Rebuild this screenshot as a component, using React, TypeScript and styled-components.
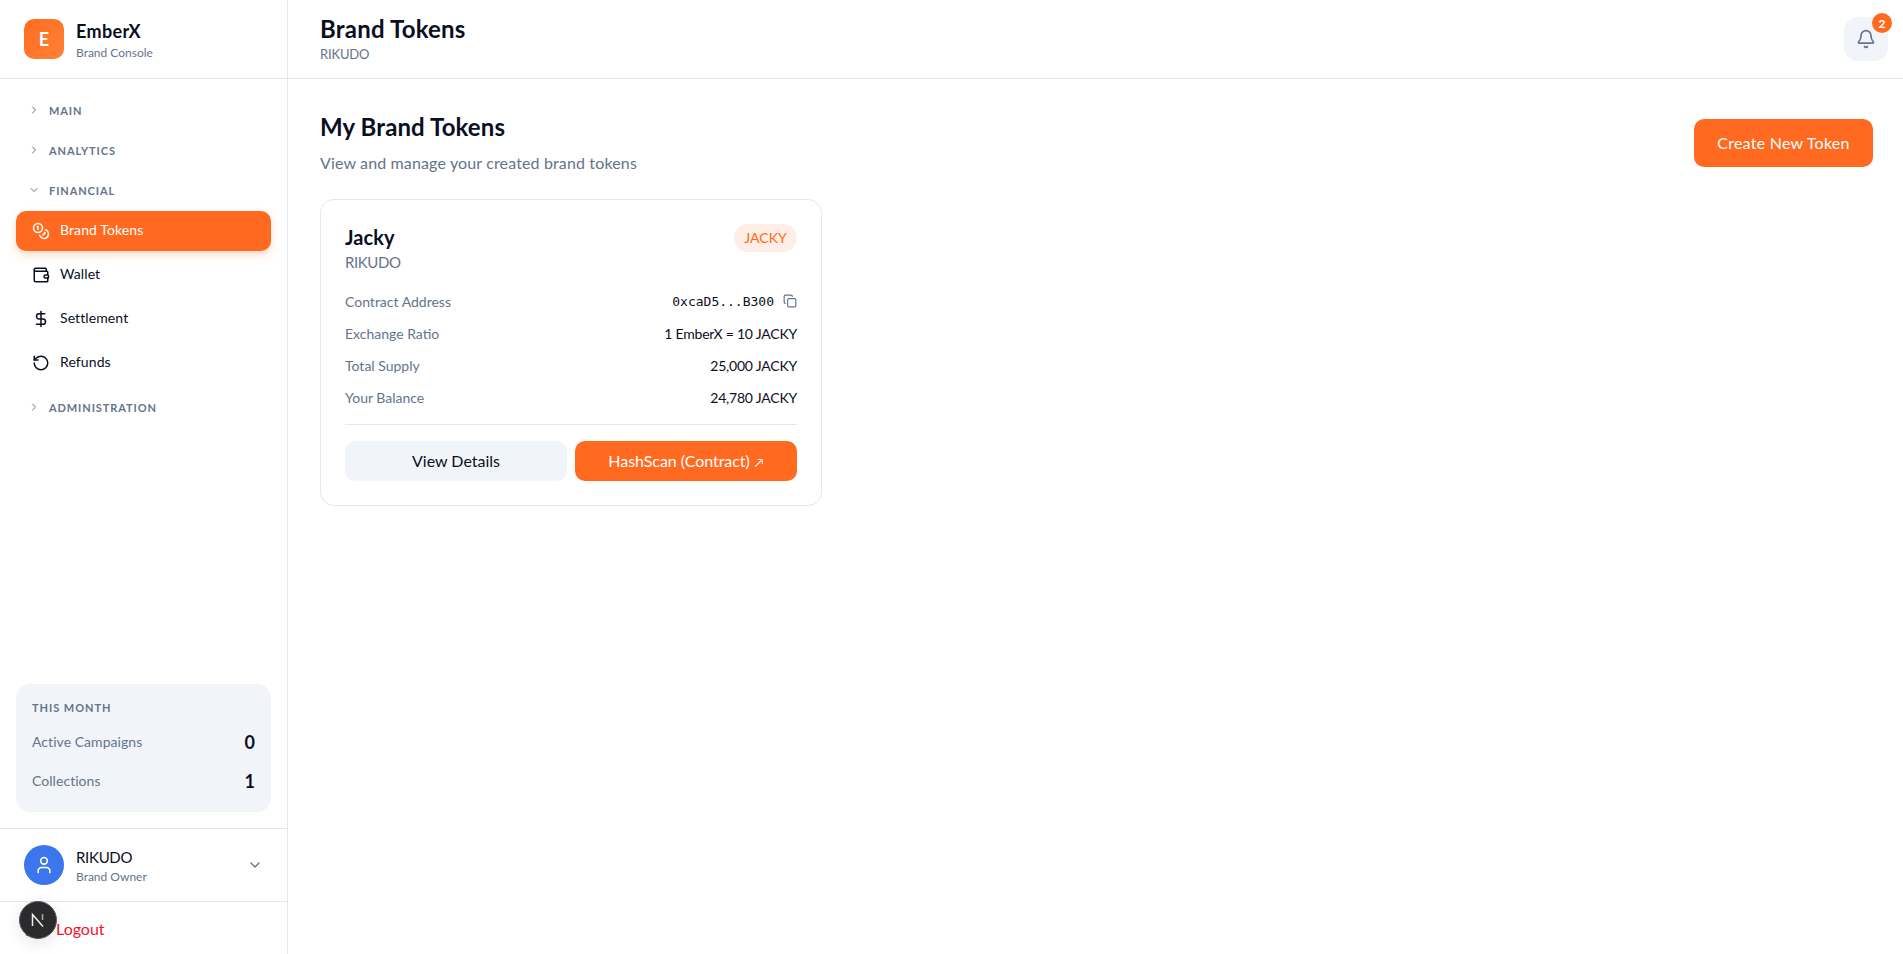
import React from "react";
import styled, { createGlobalStyle } from "styled-components";
import { Bell, ChevronDown, ChevronRight, Coins, Copy, DollarSign, LogOut, RotateCcw, User, Wallet } from "lucide-react";

const Global = createGlobalStyle`
  * { box-sizing: border-box; }
  html, body { margin: 0; padding: 0; height: 100%; background: #fff; }
  body { font-family: Lato, "Noto Sans", sans-serif; color: #0a0f1f; }
  button { font-family: inherit; border: 0; cursor: pointer; }
`;

const Shell = styled.div`
  display: flex;
  height: 954px;
  overflow: hidden;
`;
const Sidebar = styled.aside`
  width: 288px;
  flex: none;
  display: flex;
  flex-direction: column;
  border-right: 1px solid #e2e8f0;
`;
const Brand = styled.div`
  height: 79px;
  flex: none;
  display: flex;
  align-items: center;
  gap: 12px;
  padding: 0 24px;
  border-bottom: 1px solid #e2e8f0;
`;
const LogoMark = styled.div`
  width: 40px;
  height: 40px;
  border-radius: 10px;
  background: linear-gradient(135deg, #ff6b1f, #ff8238);
  color: #fff;
  font-weight: 700;
  font-size: 18px;
  display: flex;
  align-items: center;
  justify-content: center;
`;
const StackText = styled.div`
  display: flex;
  flex-direction: column;
`;
const BrandName = styled.div`
  font-size: 18px;
  line-height: 28px;
  font-weight: 700;
  letter-spacing: 0.35px;
`;
const SubLabel = styled.div`
  font-size: 12px;
  line-height: 16px;
  font-weight: 400;
  color: #64748b;
`;
const Nav = styled.nav`
  flex: 1;
  display: flex;
  flex-direction: column;
  padding: 11px 16px 0;
`;
const Section = styled.div<{ $open?: boolean }>`
  height: 40px;
  display: flex;
  align-items: center;
  gap: 9px;
  padding-left: 12px;
  margin-bottom: ${(p) => (p.$open ? "1px" : "0")};
  font-size: 11px;
  font-weight: 700;
  letter-spacing: 0.9px;
  color: #64748b;
  text-transform: uppercase;
`;
const NavItem = styled.a<{ $active?: boolean }>`
  height: 40px;
  display: flex;
  align-items: center;
  gap: 10px;
  padding-left: 16px;
  margin-bottom: 4px;
  border-radius: 10px;
  font-size: 14px;
  line-height: 18px;
  font-weight: 400;
  letter-spacing: 0.1px;
  color: ${(p) => (p.$active ? "#fff" : "#0a0f1f")};
  background: ${(p) => (p.$active ? "#ff6a20" : "transparent")};
  box-shadow: ${(p) => (p.$active ? "0 4px 8px rgba(255,106,32,.25)" : "none")};
`;
const NavLabel = styled.span`
  margin-top: -2px;
`;
const StatCard = styled.div`
  margin: 0 16px 16px;
  height: 128px;
  padding: 16px;
  border-radius: 14px;
  background: #f1f5f9;
`;
const StatHead = styled.div`
  font-size: 11px;
  line-height: 16px;
  font-weight: 700;
  letter-spacing: 0.95px;
  color: #64748b;
  margin-bottom: 6px;
`;
const StatRow = styled.div`
  height: 39px;
  display: flex;
  align-items: center;
  justify-content: space-between;
  font-size: 14px;
  letter-spacing: 0.05px;
  color: #64748b;
`;
const StatValue = styled.span`
  font-size: 18px;
  font-weight: 700;
  color: #0a0f1f;
`;
const UserRow = styled.div`
  height: 74px;
  flex: none;
  display: flex;
  align-items: center;
  gap: 12px;
  padding: 0 24px;
  border-top: 1px solid #e2e8f0;
  border-bottom: 1px solid #e2e8f0;
`;
const Avatar = styled.div`
  width: 40px;
  height: 40px;
  border-radius: 50%;
  background: #3b76ee;
  color: #fff;
  display: flex;
  align-items: center;
  justify-content: center;
`;
const UserName = styled.div`
  font-size: 15px;
  line-height: 24px;
  font-weight: 400;
  letter-spacing: -0.3px;
`;
const Grow = styled.div`
  flex: 1;
`;
const LogoutRow = styled.div`
  height: 52px;
  flex: none;
  display: flex;
  align-items: center;
  gap: 12px;
  padding-left: 24px;
  font-size: 16px;
  color: #f0142f;
`;
const DevBadge = styled.div`
  position: absolute;
  left: 19px;
  top: 901px;
  width: 38px;
  height: 38px;
  border-radius: 50%;
  background: #2b2b2d;
  border: 1px solid #55555a;
  display: flex;
  align-items: center;
  justify-content: center;
  box-shadow: 0 4px 16px rgba(0,0,0,.1);
`;
const Content = styled.div`
  flex: 1;
  min-width: 0;
  display: flex;
  flex-direction: column;
`;
const TopBar = styled.header`
  height: 79px;
  flex: none;
  display: flex;
  align-items: center;
  justify-content: space-between;
  padding: 0 15px 0 32px;
  border-bottom: 1px solid #e2e8f0;
`;
const TitleBlock = styled.div`
  display: flex;
  flex-direction: column;
  padding-bottom: 2px;
`;
const PageTitle = styled.h1`
  margin: 0 0 2px;
  font-size: 24px;
  line-height: 30px;
  font-weight: 700;
  letter-spacing: 0.2px;
`;
const PageOwner = styled.div`
  font-size: 13px;
  line-height: 16px;
  color: #64748b;
  letter-spacing: -0.15px;
`;
const BellButton = styled.div`
  position: relative;
  width: 44px;
  height: 44px;
  border-radius: 14px;
  background: #f1f5f9;
  color: #64748b;
  display: flex;
  align-items: center;
  justify-content: center;
`;
const Badge = styled.span`
  position: absolute;
  top: -4px;
  right: -4px;
  width: 20px;
  height: 20px;
  border-radius: 50%;
  background: #ff6a20;
  color: #fff;
  font-size: 12px;
  font-weight: 700;
  display: flex;
  align-items: center;
  justify-content: center;
`;
const Main = styled.main`
  flex: 1;
  padding: 32px 30px 32px 32px;
`;
const HeadRow = styled.div`
  display: flex;
  justify-content: space-between;
  align-items: center;
  margin-bottom: 24px;
`;
const SectionTitle = styled.h2`
  margin: 0 0 8px;
  font-size: 24px;
  line-height: 32px;
  font-weight: 700;
  letter-spacing: 0.1px;
`;
const SectionSub = styled.p`
  margin: 0;
  font-size: 16px;
  line-height: 24px;
  letter-spacing: 0.14px;
  color: #64748b;
`;
const PrimaryButton = styled.button`
  height: 48px;
  width: 179px;
  border-radius: 10px;
  background: #ff6a20;
  color: #fff;
  font-size: 16px;
  font-weight: 400;
  letter-spacing: 0.25px;
  padding-bottom: 2px;
`;
const TokenCard = styled.section`
  width: 502px;
  height: 307px;
  padding: 24px;
  border: 1px solid #e2e8f0;
  border-radius: 14px;
  background: #fff;
`;
const CardHead = styled.div`
  display: flex;
  justify-content: space-between;
  align-items: flex-start;
  margin-bottom: 15px;
`;
const TokenName = styled.div`
  font-size: 20px;
  line-height: 27px;
  font-weight: 700;
  letter-spacing: 0.1px;
`;
const TokenOwner = styled.div`
  font-size: 15px;
  line-height: 23px;
  margin-bottom: 2px;
  letter-spacing: -0.4px;
  color: #64748b;
`;
const Pill = styled.span`
  width: 63px;
  height: 28px;
  padding-bottom: 2px;
  border-radius: 14px;
  background: #ffeee6;
  color: #ff6a20;
  font-size: 14px;
  display: flex;
  align-items: center;
  justify-content: center;
`;
const InfoRow = styled.div`
  height: 20px;
  display: flex;
  justify-content: space-between;
  align-items: center;
  margin-bottom: 12px;
  font-size: 14px;
`;
const InfoLabel = styled.span`
  color: #64748b;
`;
const InfoValue = styled.span`
  letter-spacing: -0.22px;
`;
const Address = styled.span`
  display: flex;
  align-items: center;
  gap: 9px;
  font-family: "DejaVu Sans Mono", monospace;
  font-size: 13px;
  color: #64748b;
`;
const AddressText = styled.span`
  color: #0a0f1f;
`;
const CardDivider = styled.div`
  height: 1px;
  background: #e2e8f0;
  margin: 17px 0 16px;
`;
const Actions = styled.div`
  display: grid;
  grid-template-columns: 1fr 1fr;
  gap: 8px;
`;
const ActionButton = styled.button<{ $primary?: boolean }>`
  height: 40px;
  padding: 0 0 2px;
  border-radius: 10px;
  font-size: 16px;
  font-weight: 400;
  letter-spacing: ${(p) => (p.$primary ? "-0.05px" : "0")};
  color: ${(p) => (p.$primary ? "#fff" : "#0a0f1f")};
  background: ${(p) => (p.$primary ? "#ff6a20" : "#f1f5f9")};
`;
const ArrowGlyph = styled.span`
  font-size: 12px;
  margin-left: 5px;
`;

const infoRows = [
  ["Exchange Ratio", "1 EmberX = 10 JACKY"],
  ["Total Supply", "25,000 JACKY"],
  ["Your Balance", "24,780 JACKY"],
];

export default function App() {
  return (
    <Shell>
      <Global />
      <Sidebar>
        <Brand>
          <LogoMark>E</LogoMark>
          <StackText>
            <BrandName>EmberX</BrandName>
            <SubLabel>Brand Console</SubLabel>
          </StackText>
        </Brand>
        <Nav>
          <Section><ChevronRight size={12} />Main</Section>
          <Section><ChevronRight size={12} />Analytics</Section>
          <Section $open><ChevronDown size={12} />Financial</Section>
          <NavItem $active><Coins size={18} /><NavLabel>Brand Tokens</NavLabel></NavItem>
          <NavItem><Wallet size={18} /><NavLabel>Wallet</NavLabel></NavItem>
          <NavItem><DollarSign size={18} /><NavLabel>Settlement</NavLabel></NavItem>
          <NavItem><RotateCcw size={18} /><NavLabel>Refunds</NavLabel></NavItem>
          <Section><ChevronRight size={12} />Administration</Section>
        </Nav>
        <StatCard>
          <StatHead>THIS MONTH</StatHead>
          <StatRow>Active Campaigns<StatValue>0</StatValue></StatRow>
          <StatRow>Collections<StatValue>1</StatValue></StatRow>
        </StatCard>
        <UserRow>
          <Avatar><User size={20} /></Avatar>
          <StackText>
            <UserName>RIKUDO</UserName>
            <SubLabel>Brand Owner</SubLabel>
          </StackText>
          <Grow />
          <ChevronDown size={16} color="#64748b" />
        </UserRow>
        <LogoutRow><LogOut size={20} />Logout</LogoutRow>
      </Sidebar>
      <DevBadge>
        <svg width="18" height="18" viewBox="0 0 18 18" fill="none">
          <path d="M3.5 15V3.5L14 15.5" stroke="#eee" strokeWidth="1.5" />
          <path d="M13.5 3v6" stroke="#aaa" strokeWidth="1.5" />
        </svg>
      </DevBadge>
      <Content>
        <TopBar>
          <TitleBlock>
            <PageTitle>Brand Tokens</PageTitle>
            <PageOwner>RIKUDO</PageOwner>
          </TitleBlock>
          <BellButton>
            <Bell size={20} />
            <Badge>2</Badge>
          </BellButton>
        </TopBar>
        <Main>
          <HeadRow>
            <div>
              <SectionTitle>My Brand Tokens</SectionTitle>
              <SectionSub>View and manage your created brand tokens</SectionSub>
            </div>
            <PrimaryButton>Create New Token</PrimaryButton>
          </HeadRow>
          <TokenCard>
            <CardHead>
              <div>
                <TokenName>Jacky</TokenName>
                <TokenOwner>RIKUDO</TokenOwner>
              </div>
              <Pill>JACKY</Pill>
            </CardHead>
            <InfoRow>
              <InfoLabel>Contract Address</InfoLabel>
              <Address><AddressText>0xcaD5...B300</AddressText><Copy size={14} /></Address>
            </InfoRow>
            {infoRows.map(([label, value]) => (
              <InfoRow key={label}>
                <InfoLabel>{label}</InfoLabel>
                <InfoValue>{value}</InfoValue>
              </InfoRow>
            ))}
            <CardDivider />
            <Actions>
              <ActionButton>View Details</ActionButton>
              <ActionButton $primary>HashScan (Contract)<ArrowGlyph>↗</ArrowGlyph></ActionButton>
            </Actions>
          </TokenCard>
        </Main>
      </Content>
    </Shell>
  );
}
